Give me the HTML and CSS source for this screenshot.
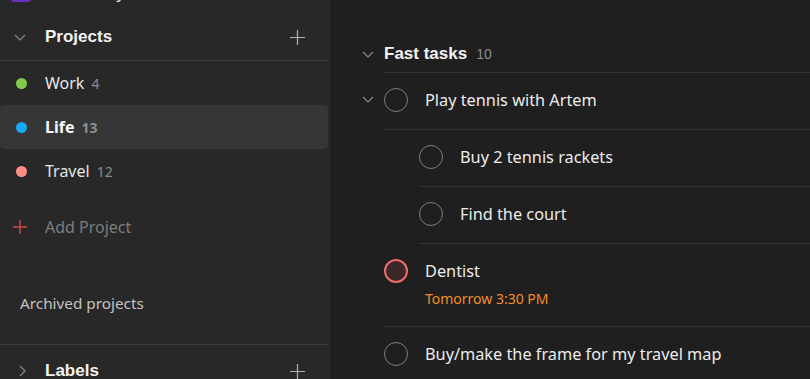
FILE: index.html
```html
<!DOCTYPE html>
<html lang="en">
<head>
  <meta charset="UTF-8">
  <meta name="viewport" content="width=device-width, initial-scale=1.0">
  <title>Life</title>
  <link rel="stylesheet" href="styles.css">
</head>
<body>
  <!-- Sidebar -->
  <aside class="sidebar">
    <div class="nav-item nav-top">
      <span class="nav-icon week"></span>
      <span class="nav-label">Next 7 days</span>
    </div>

    <div class="section-head">
      <svg class="chevron" viewBox="0 0 12 7"><path d="M1 1l5 5 5-5"/></svg>
      <span class="section-title">Projects</span>
      <svg class="plus" viewBox="0 0 18 18"><path d="M9 1v16M1 9h16"/></svg>
    </div>

    <div class="projects">
      <div class="project">
        <span class="dot" style="background:#7ecc49"></span>
        <span class="project-name">Work</span><span class="count">4</span>
      </div>
      <div class="project active">
        <span class="dot" style="background:#14aaf5"></span>
        <span class="project-name">Life</span><span class="count">13</span>
      </div>
      <div class="project">
        <span class="dot" style="background:#ff8d85"></span>
        <span class="project-name">Travel</span><span class="count">12</span>
      </div>
    </div>

    <div class="add-project">
      <svg class="plus red" viewBox="0 0 18 18"><path d="M9 1v16M1 9h16"/></svg>
      <span>Add Project</span>
    </div>

    <div class="archived">Archived projects</div>

    <div class="section-head labels">
      <svg class="chevron right" viewBox="0 0 7 12"><path d="M1 1l5 5-5 5"/></svg>
      <span class="section-title">Labels</span>
      <svg class="plus" viewBox="0 0 18 18"><path d="M9 1v16M1 9h16"/></svg>
    </div>
  </aside>

  <!-- Task list -->
  <main class="main">
    <div class="row">
      <div class="gutter head">
        <svg class="chevron" viewBox="0 0 12 7"><path d="M1 1l5 5 5-5"/></svg>
      </div>
      <div class="section-bar">
        <span class="section-name">Fast tasks</span><span class="count">10</span>
      </div>
    </div>

    <div class="row">
      <div class="gutter">
        <svg class="chevron" viewBox="0 0 12 7"><path d="M1 1l5 5 5-5"/></svg>
      </div>
      <div class="task">
        <span class="check"></span>
        <div class="task-body">
          <div class="task-text">Play tennis with Artem</div>
        </div>
      </div>
    </div>

    <div class="row">
      <div class="gutter"></div>
      <div class="task sub">
        <span class="check"></span>
        <div class="task-body">
          <div class="task-text">Buy 2 tennis rackets</div>
        </div>
      </div>
    </div>

    <div class="row">
      <div class="gutter"></div>
      <div class="task sub">
        <span class="check"></span>
        <div class="task-body">
          <div class="task-text">Find the court</div>
        </div>
      </div>
    </div>

    <div class="row">
      <div class="gutter"></div>
      <div class="task">
        <span class="check p1"></span>
        <div class="task-body">
          <div class="task-text">Dentist</div>
          <div class="due">Tomorrow 3:30 PM</div>
        </div>
      </div>
    </div>

    <div class="row">
      <div class="gutter"></div>
      <div class="task">
        <span class="check"></span>
        <div class="task-body">
          <div class="task-text">Buy/make the frame for my travel map</div>
        </div>
      </div>
    </div>
  </main>
</body>
</html>
```

FILE: styles.css
```css
/* General */
body {
  margin: 0;
  height: 100vh;
  overflow: hidden;
  display: flex;
  background-color: #1f1f1f;
  color: #e6e6e6;
  font-family: "Noto Sans", "Open Sans", sans-serif;
  font-size: 16px;
}

/* Sidebar */
.sidebar {
  width: 328px;
  padding-right: 2px;
  flex-shrink: 0;
  background-color: #282828;
  display: flex;
  flex-direction: column;
}

.sidebar > * {
  flex-shrink: 0;
}

.nav-item {
  height: 44px;
  display: flex;
  align-items: center;
}

.nav-top {
  margin-top: -30px;
}

.nav-icon {
  width: 20px;
  height: 20px;
  margin: 0 14px 0 11px;
  border-radius: 3px;
}

.nav-icon.week {
  background-color: #692fc2;
}

.section-head {
  height: 44px;
  margin-top: 1px;
  padding-right: 22px;
  display: flex;
  align-items: center;
  border-bottom: 1px solid #3b3b3b;
  padding-bottom: 1px;
}

.section-head.labels {
  border-bottom: none;
  border-top: 1px solid #3b3b3b;
  margin-top: 19px;
  padding: 4px 22px 0 0;
}

.section-title {
  flex: 1;
  font-family: "Liberation Sans", Arial, sans-serif;
  font-weight: bold;
  font-size: 17px;
  color: #f2f2f2;
}

.chevron {
  width: 12px;
  height: 7px;
  margin: 0 19px 0 14px;
  fill: none;
  stroke: #8a8a8a;
  stroke-width: 1.2;
}

.chevron.right {
  width: 7px;
  height: 12px;
  margin: 0 19px 0 19px;
}

.plus {
  width: 17px;
  height: 17px;
  fill: none;
  stroke: #b0b0b0;
  stroke-width: 1.3;
}

.plus.red {
  width: 16px;
  height: 16px;
  margin: 0 17px 0 12px;
  stroke: #c94b4b;
  stroke-width: 1.6;
}

/* Projects */
.project {
  height: 44px;
  display: flex;
  align-items: center;
  border-radius: 4px;
}

.project.active {
  background-color: #363636;
}

.project.active .project-name {
  font-weight: bold;
  color: #fafafa;
}

.project.active .count {
  font-weight: bold;
}

.dot {
  width: 11px;
  height: 11px;
  border-radius: 50%;
  margin: 0 18px 0 16px;
}

.project-name {
  color: #e6e6e6;
}

.count {
  margin-left: 7px;
  font-size: 14px;
  color: #8d8d8d;
}

.add-project {
  height: 44px;
  margin-top: 12px;
  display: flex;
  align-items: center;
  color: #7d7d7d;
}

.archived {
  height: 44px;
  margin-top: 32px;
  padding-left: 20px;
  display: flex;
  align-items: center;
  font-size: 15.3px;
  color: #c2c2c2;
}

/* Main list */
.main {
  flex: 1;
  padding: 35px 0 0 24px;
}

.row {
  display: flex;
}

.gutter {
  width: 30px;
  flex-shrink: 0;
  display: flex;
  justify-content: center;
  align-items: flex-start;
  padding-top: 23px;
}

.gutter.head {
  padding-top: 0;
  align-items: center;
}

.gutter .chevron {
  margin: 0 2px 0 0;
}

.section-bar {
  flex: 1;
  height: 37px;
  display: flex;
  align-items: center;
  border-bottom: 1px solid #333;
  font-family: "Liberation Sans", Arial, sans-serif;
}

.section-name {
  font-weight: bold;
  font-size: 17px;
  color: #f2f2f2;
}

.section-bar .count {
  font-size: 14px;
  margin-left: 9px;
}

.task {
  flex: 1;
  display: flex;
  align-items: flex-start;
  padding: 15px 0 17px;
  border-bottom: 1px solid #333;
  font-size: 16.3px;
}

.task.sub {
  margin-left: 35px;
}

.check {
  box-sizing: border-box;
  width: 24px;
  height: 24px;
  border: 1px solid #808080;
  border-radius: 50%;
  flex-shrink: 0;
}

.check.p1 {
  border: 2.5px solid #ee6c69;
  background-color: #3b2727;
}

.task-body {
  margin-left: 17px;
}

.task-text {
  line-height: 24px;
  color: #ececec;
}

.due {
  margin-top: 6px;
  line-height: 20px;
  font-size: 14px;
  color: #f18c2a;
}
```
